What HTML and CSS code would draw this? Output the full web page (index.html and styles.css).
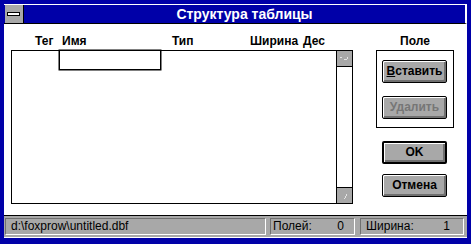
FILE: index.html
```html
<!DOCTYPE html>
<html lang="ru">
<head>
<meta charset="utf-8">
<title>Структура таблицы</title>
<link rel="stylesheet" href="styles.css">
</head>
<body>
<div class="window">
  <div class="titlebar">
    <div class="sysmenu"><span class="sysbar"></span></div>
    <div class="title">Структура таблицы</div>
  </div>
  <div class="content">
    <div class="leftcol">
      <div class="headers">
        <span class="h-tag">Тег</span><span class="h-name">Имя</span><span class="h-type">Тип</span><span class="h-width">Ширина</span><span class="h-dec">Дес</span>
      </div>
      <div class="listbox">
        <div class="listarea"><div class="editbox"></div></div>
        <div class="scrollbar">
          <div class="arrow up">
            <svg width="15" height="15" viewBox="0 0 15 15"><g fill="#e4e4e4"><rect x="3" y="6" width="2" height="1"/><rect x="7" y="8" width="3" height="1"/><rect x="10" y="6" width="1" height="2"/></g></svg>
          </div>
          <div class="track"></div>
          <div class="arrow down">
            <svg width="15" height="15" viewBox="0 0 15 15"><g fill="#e4e4e4"><rect x="9" y="6" width="1" height="2"/><rect x="8" y="8" width="1" height="2"/><rect x="7" y="10" width="1" height="1"/></g></svg>
          </div>
        </div>
      </div>
    </div>
    <div class="rightcol">
      <div class="grouplabel">Поле</div>
      <div class="groupbox">
        <div class="btn"><span class="ul">В</span>ставить</div>
        <div class="btn disabled">Удалить</div>
      </div>
      <div class="btn default ok">OK</div>
      <div class="btn cancel">Отмена</div>
    </div>
  </div>
  <div class="statusbar">
    <div class="panel p-file">d:\foxprow\untitled.dbf</div>
    <div class="panel p-fields"><span>Полей:</span><span>0</span></div>
    <div class="panel p-width"><span>Ширина:</span><span>1</span></div>
  </div>
</div>
</body>
</html>
```
FILE: styles.css
```css
* { box-sizing: border-box; }
html, body { margin: 0; padding: 0; }
body {
  background: #0000a8;
  width: 471px;
  height: 244px;
  overflow: hidden;
  font-family: "Liberation Sans", Arial, sans-serif;
}
.window {
  margin: 4px 0 0 4px;
  width: 463px;
  height: 234px;
  background: #fff;
  display: flex;
  flex-direction: column;
}
.titlebar {
  height: 20px;
  display: flex;
  border-bottom: 1px solid #000;
  border-top: 1px solid #fff;
  border-right: 2px solid #fff;
  background: #0000a8;
}
.sysmenu {
  width: 19px;
  background: #a8a8a8;
  border-right: 1px solid #000;
  margin-left: 1px;
  display: flex;
  align-items: center;
  justify-content: center;
}
.sysbar {
  display: block;
  width: 13px;
  height: 4px;
  background: #fff;
  border: 1px solid #000;
  margin-left: -1px;
}
.title {
  flex: 1;
  color: #fff;
  font-weight: bold;
  font-size: 14px;
  line-height: 18px;
  text-align: center;
}
.content {
  flex: 1;
  display: flex;
  padding: 10px 0 0 7px;
  border-bottom: 1px solid #000;
}
.leftcol { width: 342px; }
.headers {
  display: flex;
  font-size: 12px;
  font-weight: bold;
  line-height: 14px;
  height: 16px;
  white-space: nowrap;
}
.h-tag { width: 51px; padding-left: 24px; }
.h-name { width: 110px; }
.h-type { width: 78px; }
.h-width { width: 53px; }
.h-dec { width: 40px; }
.listbox {
  width: 342px;
  height: 154px;
  border: 1px solid #000;
  display: flex;
}
.listarea { flex: 1; }
.editbox {
  margin: -1px 0 0 47px;
  width: 102px;
  height: 20px;
  border: 1px solid #000;
  box-shadow: 0 0 0 0.5px #000;
}
.scrollbar {
  width: 16px;
  border-left: 1px solid #000;
  display: flex;
  flex-direction: column;
}
.arrow {
  height: 16px;
  background: #a8a8a8;
}
.arrow svg { display: block; }
.arrow.up { border-bottom: 1px solid #000; }
.arrow.down { border-top: 1px solid #000; }
.track { flex: 1; }
.rightcol {
  margin-left: 23px;
  width: 78px;
  display: flex;
  flex-direction: column;
}
.grouplabel {
  font-size: 12px;
  font-weight: bold;
  line-height: 14px;
  height: 16px;
  text-align: center;
}
.groupbox {
  height: 78px;
  border: 1px solid #000;
  padding: 9px 0 0 5px;
  display: flex;
  flex-direction: column;
  gap: 13px;
}
.btn {
  width: 65px;
  height: 23px;
  background: #a8a8a8;
  border: 1px solid #000;
  border-radius: 2px;
  box-shadow: inset 1px 1px 0 #fff, inset -2px -2px 0 #707070;
  font-size: 12px;
  font-weight: bold;
  line-height: 20px;
  text-align: center;
  color: #000;
}
.ul { text-decoration: underline; }
.btn.disabled { color: #767676; font-weight: bold; }
.btn.ok { margin: 13px 0 0 6px; border-width: 2px; line-height: 18px; }
.btn.cancel { margin: 10px 0 0 6px; }
.statusbar {
  height: 22px;
  background: #a8a8a8;
  display: flex;
  padding: 2px 3px 2px 1px;
  font-size: 12px;
  line-height: 15px;
  border-bottom: 1px solid #fff;
}
.panel {
  border: 1px solid;
  border-color: #707070 #fff #fff #707070;
  padding: 0 0 0 5px;
  white-space: nowrap;
}
.p-file { width: 261px; }
.p-fields {
  width: 85px;
  margin-left: 4px;
  display: flex;
  justify-content: space-between;
  padding: 0 10px 0 2px;
}
.p-width {
  width: 104px;
  margin-left: 5px;
  display: flex;
  justify-content: space-between;
  padding: 0 13px 0 5px;
}
```
